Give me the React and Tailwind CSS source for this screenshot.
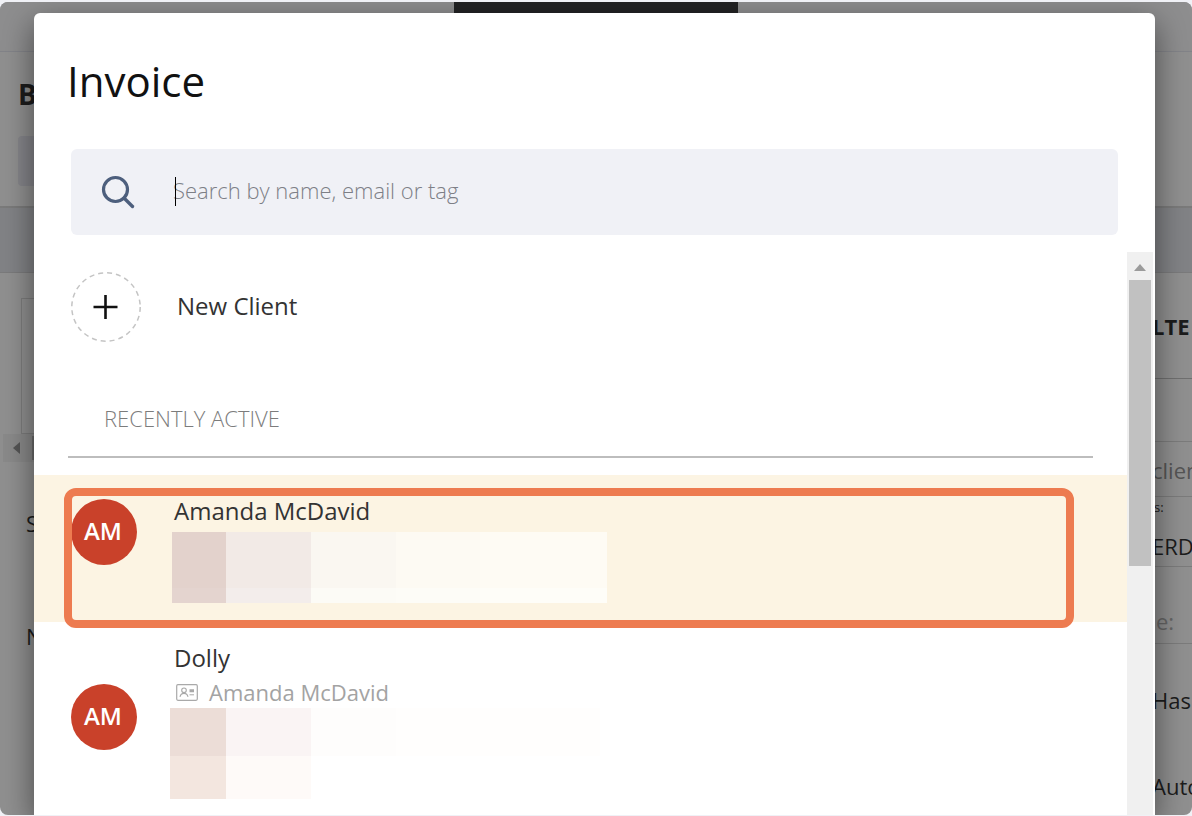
import { useState } from "react";

const CLIENTS = [
  {
    id: 1,
    initials: "AM",
    name: "Amanda McDavid",
    selected: true,
    mosaic: {
      grid: "ml-[-2px] mt-[5px] grid w-[435px] grid-cols-[54px_85px_85px_84px_1fr] grid-rows-[56px_15px]",
      cells: [
        "bg-[#e3d2cc]", "bg-[#f2eae6]", "bg-[#faf7f1]", "bg-[#fdfaf3]", "bg-[#fefbf4]",
        "bg-[#e4d4cf]", "bg-[#f3edeb]", "bg-[#fcfbf6]", "bg-[#fdfcf7]", "bg-[#fefdf8]",
      ],
    },
  },
  {
    id: 2,
    initials: "AM",
    name: "Dolly",
    contact: "Amanda McDavid",
    selected: false,
    mosaic: {
      grid: "ml-[-4px] grid w-[430px] grid-cols-[56px_85px_85px_1fr] grid-rows-[48px_43px]",
      cells: [
        "bg-[#ecddd7]", "bg-[#faf4f4]", "bg-[#fefdfc]", "bg-[#fffefd]",
        "bg-[#f3e6df]", "bg-[#fefaf8]", "bg-white", "bg-white",
      ],
    },
  },
];

function SearchIcon() {
  return (
    <svg width="34" height="34" viewBox="0 0 34 34" fill="none" stroke="#4d5f7d" aria-hidden="true">
      <circle cx="14.5" cy="14.5" r="12" strokeWidth="3.2" />
      <path d="M23 23 L31.5 31.5" strokeWidth="3.4" strokeLinecap="round" />
    </svg>
  );
}

function ContactIcon() {
  return (
    <svg width="22" height="17" viewBox="0 0 22 17" fill="none" stroke="#a9a9a9" aria-hidden="true">
      <rect x="0.7" y="0.7" width="20.6" height="15.6" rx="1.2" strokeWidth="1.2" />
      <circle cx="8" cy="6.3" r="2.3" strokeWidth="1.1" />
      <path d="M4 12.8c.4-2 1.6-3.4 4-3.4s3.6 1.4 4 3.4" strokeWidth="1.1" />
      <path d="M13.5 6h4.5M13.5 7.5h4.5" strokeWidth="1.4" />
      <path d="M13.5 10.8h4.5" strokeWidth="1" />
    </svg>
  );
}

function Mosaic({ grid, cells }) {
  return (
    <div className={grid}>
      {cells.map((color, i) => (
        <span key={i} className={color} />
      ))}
    </div>
  );
}

function ClientRow({ client, onSelect }) {
  return (
    <li className={client.selected ? "relative bg-[#fcf4e3]" : "relative"}>
      <button
        type="button"
        onClick={() => onSelect(client.id)}
        className={
          client.selected
            ? "flex min-h-[147px] w-full items-start pl-[37px] text-left"
            : "flex min-h-[193px] w-full items-start pl-[37px] text-left"
        }
      >
        <span
          className={
            client.contact
              ? "mt-[62px] flex size-[66px] shrink-0 items-center justify-center rounded-full bg-[#c9412a] pr-0.5 pb-0.5 text-2xl font-semibold text-white"
              : "mt-6 flex size-[66px] shrink-0 items-center justify-center rounded-full bg-[#c9412a] pr-0.5 pb-0.5 text-2xl font-semibold text-white"
          }
        >
          {client.initials}
        </span>
        <div className="ml-[37px] min-w-0 pt-5">
          <div className="text-2xl leading-8 font-medium text-[#333]">{client.name}</div>
          {client.contact && (
            <div className="mt-0.5 flex items-center gap-[11px] pl-0.5 text-[22px] leading-8 font-medium text-[#a3a3a3]">
              <ContactIcon />
              {client.contact}
            </div>
          )}
          <Mosaic {...client.mosaic} />
        </div>
      </button>
      {client.selected && (
        <div className="pointer-events-none absolute top-[13px] right-[53px] bottom-[-6px] left-[30px] rounded-xl border-8 border-[#ed7b50]" />
      )}
    </li>
  );
}

/* Dimmed page that shows around the dialog */
function Backdrop() {
  return (
    <div className="flex min-h-full flex-col bg-[#909090] text-[#1c1c1c]" aria-hidden="true">
      <div className="flex h-[50px] justify-center border-b border-[#838489] bg-[#8e8e8f]">
        <div className="h-full w-[284px] bg-[#232325]" />
      </div>
      <div className="h-[156px] border-b-2 border-[#7b7b7b] pt-[22px] pl-[18px]">
        <div className="text-[28px] leading-10 font-bold">B</div>
        <div className="mt-[22px] h-[50px] w-40 rounded bg-[#85858a]" />
      </div>
      <div className="h-[65px] border-b border-[#7b7b7c] bg-[#828386]" />
      <div className="flex grow justify-between">
        <div className="w-40 pt-[25px] text-[22px] leading-8">
          <div className="ml-[21px] h-[136px] border border-[#7d7d7d]" />
          <div className="ml-[3px] flex h-7 items-center bg-[#8a8a8a] pl-2.5">
            <svg width="7" height="12" viewBox="0 0 7 12" fill="#555">
              <path d="M7 0v12L0 6z" />
            </svg>
            <div className="ml-3 h-6 grow bg-[#6c6c6c]" />
          </div>
          <div className="mt-[45px] pl-[26px]">S</div>
          <div className="mt-[81px] pl-[26px]">N</div>
        </div>
        <div className="w-10 pt-[37px] text-[22px] leading-8 whitespace-nowrap">
          <div className="border-b border-[#707070] pb-9 font-bold">LTE</div>
          <div className="h-[63px] border-b border-[#7c7c7c]" />
          <div className="h-[55px] border-b border-[#7c7c7c] pt-3 text-[#555]">clien</div>
          <div className="h-[70px] border-b border-[#7c7c7c]">
            <div className="pl-0.5 text-[13px] leading-5">s:</div>
            <div className="mt-[13px]">ERD</div>
          </div>
          <div className="h-[77px] border-b border-[#7c7c7c] pt-[38px] pl-1 text-[#666]">e:</div>
          <div className="mt-10">Has</div>
          <div className="mt-[54px]">Auto</div>
        </div>
      </div>
    </div>
  );
}

export default function App() {
  const [query, setQuery] = useState("");
  const [, setSelectedId] = useState(1);

  return (
    <div className="h-screen bg-[#f0f1f6] pt-0.5 pb-px font-['Open_Sans',sans-serif]">
      <div className="relative h-full overflow-hidden rounded-lg">
        <Backdrop />

        <div className="absolute inset-0 flex pt-[11px] pr-[37px] pl-[34px]">
          <section
            role="dialog"
            aria-labelledby="dialog-title"
            className="flex min-w-0 grow flex-col overflow-hidden rounded-t-md bg-white shadow-[0_10px_32px_rgba(0,0,0,0.5)]"
          >
            <h1 id="dialog-title" className="pt-9 pl-[33px] text-[42px] leading-[64px] text-[#111]">
              Invoice
            </h1>

            <label className="relative mx-[37px] mt-9 flex h-[86px] shrink-0 items-center rounded-md bg-[#f0f1f6] pl-[30px]">
              <SearchIcon />
              <input
                type="text"
                aria-label="Search clients"
                value={query}
                onChange={(e) => setQuery(e.target.value)}
                placeholder="Search by name, email or tag"
                className="ml-[38px] h-full min-w-0 grow bg-transparent pb-1 text-[22px] font-light text-[#333] outline-none placeholder:text-[#7d7f86]"
              />
              <span className="absolute top-7 left-[104px] h-[29px] w-px bg-black" />
            </label>

            <div className="mt-[17px] flex min-h-0 grow">
              <div className="min-w-0 grow overflow-hidden">
                <button type="button" className="mt-5 ml-[37px] flex items-center text-2xl font-medium text-[#333]">
                  <svg width="70" height="70" viewBox="0 0 70 70" fill="none" aria-hidden="true">
                    <circle cx="35" cy="35" r="34.2" stroke="#c4c4c4" strokeWidth="1.5" strokeDasharray="5 4" />
                    <path d="M22.5 35h24M34.5 23v24" stroke="#111" strokeWidth="2.6" />
                  </svg>
                  <span className="ml-9 pb-0.5">New Client</span>
                </button>

                <h2 className="mx-[34px] mt-[60px] border-b-2 border-[#bdbdbd] pb-[22px] pl-9 text-[22px] leading-8 font-light text-[#7c7c7c]">
                  RECENTLY ACTIVE
                </h2>

                <ul className="mt-[17px]">
                  {CLIENTS.map((client) => (
                    <ClientRow key={client.id} client={client} onSelect={setSelectedId} />
                  ))}
                </ul>
              </div>

              <div className="mr-0.5 flex w-[26px] shrink-0 flex-col items-center bg-[#f0f0f0] pt-3">
                <svg width="12" height="7" viewBox="0 0 12 7" fill="#9b9b9b" aria-hidden="true">
                  <path d="M0 7 6 0l6 7z" />
                </svg>
                <div className="mt-[9px] h-[286px] w-[22px] bg-[#c1c1c1]" />
              </div>
            </div>
          </section>
        </div>
      </div>
    </div>
  );
}
